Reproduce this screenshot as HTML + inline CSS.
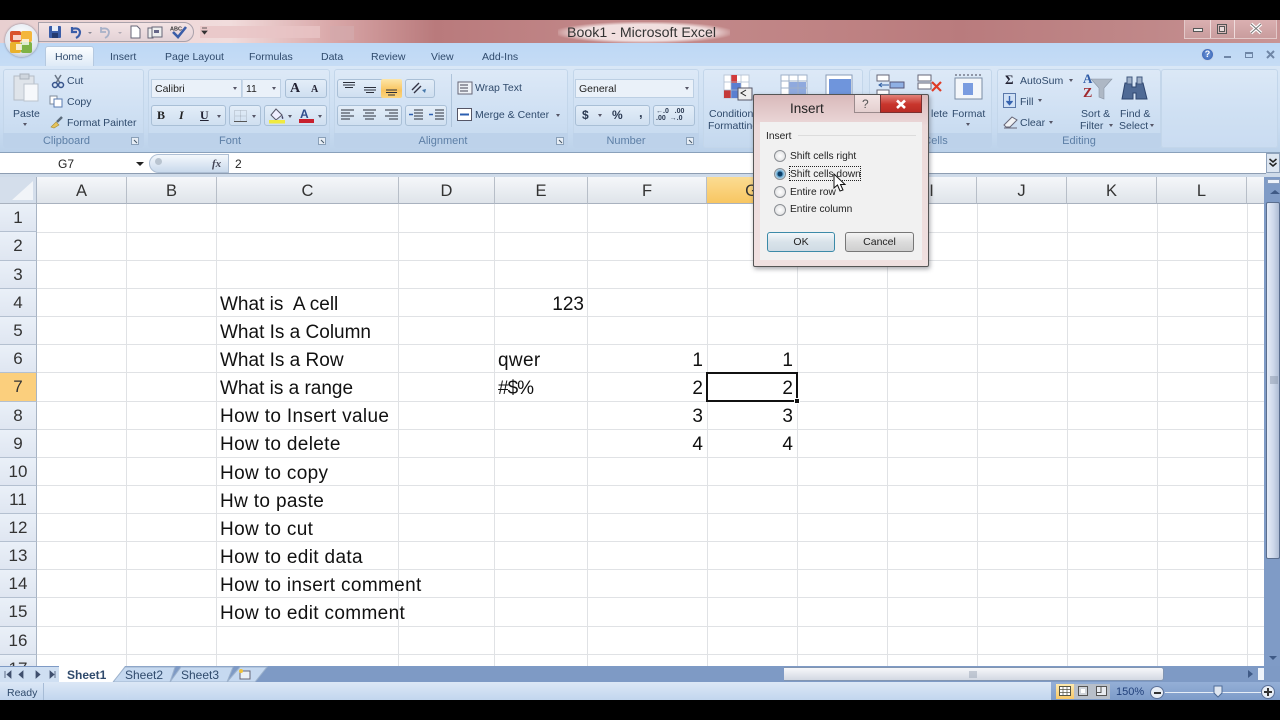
<!DOCTYPE html>
<html><head><meta charset="utf-8"><style>
html,body{margin:0;padding:0;background:#000;width:1280px;height:720px;overflow:hidden}
body{font-family:"Liberation Sans",sans-serif;position:relative}
#app{position:absolute;left:0;top:0;width:1280px;height:720px;overflow:hidden;filter:blur(.35px)}
.a{position:absolute}
.t{position:absolute;white-space:nowrap;line-height:16px;font-size:10.5px;color:#2f4a6c}
.k{color:#222}
.g{position:absolute;background:#e0e2e5}
.c{position:absolute;white-space:nowrap;font-size:19px;letter-spacing:.35px;line-height:32px;color:#111;height:28px}
.r{text-align:right;letter-spacing:0}
.rn{position:absolute;left:0;width:37px;text-align:center;font-size:17px;line-height:28px;height:28px;color:#333;background:linear-gradient(#eaf0f8,#dfe6f1);box-sizing:border-box;border-bottom:1px solid #b4c0d0;border-right:1px solid #a8b4c4}
.ch{position:absolute;top:177px;height:27px;text-align:center;font-size:16.5px;line-height:29px;color:#333;background:linear-gradient(#f5f7fa,#dfe4ea);box-sizing:border-box;border-right:1px solid #b7bec8;border-bottom:1px solid #a9b2bf}
.grp{position:absolute;top:69px;height:79px;border-radius:3px;background:linear-gradient(#dde9f7 0%,#cfe0f3 55%,#c4d8ee 100%);box-shadow:inset 0 0 0 1px #c3d6ea}
.gl{position:absolute;left:0;right:0;bottom:0;height:15px;background:#bdd2ea;text-align:center;font-size:11px;line-height:16px;color:#5d7fa6;border-radius:0 0 3px 3px}
.btn{position:absolute;box-sizing:border-box;border:1px solid #a9bfd6;border-radius:3px;background:linear-gradient(#e3edf8,#cfdff0)}
.inp{position:absolute;box-sizing:border-box;background:#eaf1f9;border:1px solid #bccfe3;height:19px;font-size:10.5px;line-height:19px;color:#222;padding-left:3px}
.arr{position:absolute;width:0;height:0;border-left:2.5px solid transparent;border-right:2.5px solid transparent;border-top:3px solid #556}
.tab{position:absolute;top:49px;font-size:10.5px;line-height:16px;color:#2f4a6c;white-space:nowrap}
.radio{position:absolute;left:774px;width:10px;height:10px;border-radius:50%;border:1px solid #8b8f94;background:radial-gradient(#fff,#d9dadc)}
.rl{position:absolute;left:790px;font-size:10.2px;line-height:14px;color:#222;white-space:nowrap}
svg{position:absolute;overflow:visible}
</style></head><body><div id="app">

<!-- title bar -->
<div class="a" style="left:0;top:20px;width:1280px;height:23px;background:linear-gradient(90deg,#e8cfd0 0,#f1dcdc 18%,#d9a7a8 26%,#b97a7c 34%,#c38a8b 50%,#bf8384 64%,#b97b7d 75%,#c08889 90%,#c89495 100%)"></div>
<div class="a" style="left:200px;top:26px;width:120px;height:12px;background:#e9c4c6;opacity:.8"></div>
<div class="a" style="left:330px;top:26px;width:24px;height:14px;background:#d3a9ab;opacity:.8"></div>
<div class="a" style="left:558px;top:22px;width:172px;height:21px;background:radial-gradient(ellipse at center,#f1dfdf 55%,rgba(240,220,220,0) 75%)"></div>
<div class="t k" style="left:567px;top:25px;font-size:14.2px;line-height:16px;color:#333">Book1 - Microsoft Excel</div>
<!-- QAT -->
<div class="a" style="left:38px;top:22px;width:156px;height:20px;border-radius:0 11px 11px 0;background:linear-gradient(#f3e3e4,#e3d2d6);border:1px solid #a9a1aa;box-sizing:border-box"></div>
<svg style="left:48px;top:25px" width="150" height="15" viewBox="0 0 150 15">
<rect x="1" y="1" width="12" height="12" fill="#3a5da8" rx="1"/><rect x="4" y="1" width="6" height="5" fill="#e8eef8"/><rect x="4" y="8" width="6" height="5" fill="#23396f"/>
<path d="M24 4 Q31 2 32 7 Q32 11 28 13 M24 2 V7 H29" fill="none" stroke="#3a5da8" stroke-width="2.2"/>
<path d="M40 7h4l-2 2z" fill="#8a8a96"/>
<path d="M53 4 Q60 2 61 7 Q61 11 57 13 M53 2 V7 H58" fill="none" stroke="#a8b1c8" stroke-width="1.8"/>
<path d="M70 7h4l-2 2z" fill="#b0aab4"/>
<path d="M83 1h6l3 3v9h-9z" fill="#fff" stroke="#667"/>
<rect x="100" y="3" width="5" height="10" fill="#eee" stroke="#667"/><rect x="104" y="2" width="10" height="10" fill="#eee" stroke="#667"/><rect x="106" y="5" width="5" height="3" fill="#668"/>
<path d="M125 7 L130 12 L138 2" fill="none" stroke="#3a5da8" stroke-width="2.6"/>
<text x="122" y="5.5" font-size="5.5" font-family="Liberation Sans" font-weight="bold" fill="#333">ABC</text>
<path d="M154 3h5M154 6h5l-2.500 3z" fill="#333" stroke="#333" stroke-width=".8"/>
</svg>
<!-- window controls -->
<div class="a" style="left:1184px;top:20px;width:93px;height:19px;border:1px solid #e3c9c9;border-top:0;box-sizing:border-box;background:linear-gradient(#dab0b1,#c99c9d)"></div>
<div class="a" style="left:1210px;top:20px;width:1px;height:18px;background:#efdcdc"></div>
<div class="a" style="left:1234px;top:20px;width:1px;height:18px;background:#efdcdc"></div>
<div class="a" style="left:1193px;top:28px;width:10px;height:4px;border:1px solid #555;background:#eee;box-sizing:border-box"></div>
<div class="a" style="left:1217px;top:24px;width:10px;height:10px;border:1px solid #555;box-sizing:border-box;background:#d9b9ba"></div>
<div class="a" style="left:1219px;top:26px;width:6px;height:6px;border:1px solid #555;box-sizing:border-box;background:#eadada"></div>
<svg style="left:1249px;top:23px" width="14" height="12"><path d="M2 1 L12 10 M12 1 L2 10" stroke="#fff" stroke-width="3.500"/><path d="M2 1 L12 10 M12 1 L2 10" stroke="#777" stroke-width="1"/></svg>

<!-- tabs row -->
<div class="a" style="left:0;top:43px;width:1280px;height:23px;background:linear-gradient(#bdd8f5,#c6dcf5)"></div>
<div class="a" style="left:45px;top:46px;width:49px;height:21px;background:linear-gradient(#fbfdff,#dde9f6);border:1px solid #b5c9e0;border-bottom:0;border-radius:3px 3px 0 0;box-sizing:border-box"></div>
<div class="tab" style="left:55px">Home</div>
<div class="tab" style="left:110px">Insert</div>
<div class="tab" style="left:165px">Page Layout</div>
<div class="tab" style="left:249px">Formulas</div>
<div class="tab" style="left:321px">Data</div>
<div class="tab" style="left:371px">Review</div>
<div class="tab" style="left:431px">View</div>
<div class="tab" style="left:482px">Add-Ins</div>
<div class="a" style="left:1201px;top:48px;width:13px;height:13px;border-radius:50%;background:radial-gradient(#6f96d8,#2f5cb0);border:1px solid #c4d3ea;box-sizing:border-box;color:#fff;font-size:9px;line-height:11px;text-align:center;font-weight:bold">?</div>
<div class="a" style="left:1224px;top:56px;width:7px;height:2px;background:#6f86a6"></div>
<div class="a" style="left:1245px;top:52px;width:8px;height:6px;border:1px solid #6f86a6;border-top-width:2px;box-sizing:border-box"></div>
<svg style="left:1266px;top:50px" width="10" height="10"><path d="M1 1L8 8M8 1L1 8" stroke="#6f86a6" stroke-width="2"/></svg>

<!-- ribbon -->
<div class="a" style="left:0;top:66px;width:1280px;height:87px;background:linear-gradient(#d9e7f6,#c9dcf1 70%,#bcd2ea);border-bottom:1px solid #8aa1bb;box-sizing:border-box"></div>
<div class="grp" style="left:3px;width:141px"><div class="gl" style="padding-right:14px">Clipboard</div></div>
<div class="grp" style="left:148px;width:182px"><div class="gl" style="padding-right:18px">Font</div></div>
<div class="grp" style="left:334px;width:234px"><div class="gl" style="padding-right:16px">Alignment</div></div>
<div class="grp" style="left:573px;width:126px"><div class="gl" style="padding-right:20px">Number</div></div>
<div class="grp" style="left:703px;width:160px"></div>
<div class="grp" style="left:869px;width:123px"><div class="gl" style="padding-left:10px">Cells</div></div>
<div class="grp" style="left:997px;width:164px"><div class="gl">Editing</div></div>
<div class="grp" style="left:1161px;width:117px;background:linear-gradient(#dbe8f6,#cfe0f3 55%,#cadcf1)"></div>

<!-- office orb -->
<div class="a" style="left:5px;top:24px;width:33px;height:33px;border-radius:50%;background:radial-gradient(circle at 50% 35%,#fff,#dfe6f0 65%,#9aa6b6);box-shadow:0 0 2px #778"></div>
<svg style="left:9px;top:29px" width="26" height="26" viewBox="0 0 26 26">
<rect x="1" y="2" width="11" height="11" rx="2" fill="#d9522a"/><rect x="12" y="2" width="11" height="11" rx="2" fill="#f4b63c"/><rect x="1" y="13" width="11" height="11" rx="2" fill="#e9b12d"/><rect x="12" y="13" width="11" height="11" rx="2" fill="#7fb245"/>
<path d="M4 6h8v5H4zM13 10h7v6h-7zM7 15h6v6H7z" fill="#fff" opacity=".75"/></svg>

<!-- clipboard -->
<svg style="left:13px;top:73px" width="28" height="30"><rect x="1" y="3" width="20" height="24" fill="#dfe4ea" stroke="#b4bcc6"/><rect x="7" y="1" width="9" height="5" fill="#cfd6de" stroke="#aab2bc"/><rect x="11" y="11" width="14" height="17" fill="#f6f8fb" stroke="#bcc4ce"/></svg>
<div class="t" style="left:13px;top:106px;color:#2f4a6c">Paste</div>
<div class="arr" style="left:23px;top:123px"></div>
<svg style="left:51px;top:74px" width="14" height="15"><path d="M4 1L9 9M10 1L5 9" stroke="#6a7686" stroke-width="1.500"/><circle cx="4" cy="11" r="2.500" fill="none" stroke="#37548c" stroke-width="1.500"/><circle cx="10" cy="11" r="2.500" fill="none" stroke="#37548c" stroke-width="1.500"/></svg>
<div class="t" style="left:67px;top:73px">Cut</div>
<svg style="left:49px;top:95px" width="14" height="13"><rect x="1" y="1" width="7" height="8" fill="#fff" stroke="#7e8a9a"/><rect x="5" y="4" width="8" height="8" fill="#fff" stroke="#5a7bb0"/></svg>
<div class="t" style="left:67px;top:94px">Copy</div>
<svg style="left:49px;top:115px" width="15" height="14"><path d="M2 12L7 7L10 10L5 13Z" fill="#e6c35c" stroke="#a68b30" stroke-width=".6"/><path d="M8 7L13 2" stroke="#5a6a7a" stroke-width="2.500"/></svg>
<div class="t" style="left:67px;top:115px">Format Painter</div>
<!-- font -->
<div class="inp" style="left:151px;top:79px;width:91px">Calibri<div class="arr" style="left:81px;top:7px"></div></div>
<div class="inp" style="left:242px;top:79px;width:39px;border-left:1px solid #c9d8e8">11<div class="arr" style="left:29px;top:7px"></div></div>
<div class="btn" style="left:285px;top:79px;width:42px;height:19px"></div>
<div class="a" style="left:290px;top:80px;font:bold 14px/17px 'Liberation Serif',serif;color:#223">A</div>
<div class="a" style="left:311px;top:83px;font:bold 10px/14px 'Liberation Serif',serif;color:#223">A</div>
<div class="btn" style="left:151px;top:105px;width:75px;height:21px"></div>
<div class="a" style="left:157px;top:107px;font:bold 12px/16px 'Liberation Serif',serif;color:#222">B</div>
<div class="a" style="left:179px;top:107px;font:italic bold 12px/16px 'Liberation Serif',serif;color:#222">I</div>
<div class="a" style="left:200px;top:107px;font:bold 12px/16px 'Liberation Serif',serif;color:#223;text-decoration:underline">U</div>
<div class="arr" style="left:217px;top:115px"></div>
<div class="btn" style="left:229px;top:105px;width:32px;height:21px"></div>
<svg style="left:234px;top:110px" width="13" height="12"><path d="M.5.5h12v11H.5zM.5 6h12M6.500.5v11" fill="none" stroke="#aab4c0" stroke-dasharray="1 1"/><path d="M0 11.500h13" stroke="#555"/></svg>
<div class="arr" style="left:252px;top:115px"></div>
<div class="btn" style="left:264px;top:105px;width:63px;height:21px"></div>
<svg style="left:268px;top:108px" width="18" height="16"><path d="M8 1L14 7L8 12L3 7Z" fill="#eef" stroke="#556"/><path d="M14 7q2 3 1 4q-2 0-1-4" fill="#446"/><rect x="1" y="12" width="16" height="3.500" fill="#f0ea40"/></svg>
<div class="arr" style="left:288px;top:115px"></div>
<div class="a" style="left:300px;top:108px;font:bold 12px/13px 'Liberation Sans',sans-serif;color:#2f4d8c">A</div>
<div class="a" style="left:299px;top:119px;width:15px;height:4px;background:#c8202e"></div>
<div class="arr" style="left:318px;top:115px"></div>
<svg style="left:131px;top:137px" width="9" height="9"><rect x=".5" y=".5" width="7" height="7" fill="#e6edf5" stroke="#8aa0b8"/><path d="M3 3L6 6" stroke="#456"/></svg>
<svg style="left:318px;top:137px" width="9" height="9"><rect x=".5" y=".5" width="7" height="7" fill="#e6edf5" stroke="#8aa0b8"/><path d="M3 3L6 6" stroke="#456"/></svg>
<svg style="left:556px;top:137px" width="9" height="9"><rect x=".5" y=".5" width="7" height="7" fill="#e6edf5" stroke="#8aa0b8"/><path d="M3 3L6 6" stroke="#456"/></svg>
<svg style="left:686px;top:137px" width="9" height="9"><rect x=".5" y=".5" width="7" height="7" fill="#e6edf5" stroke="#8aa0b8"/><path d="M3 3L6 6" stroke="#456"/></svg>
<!-- alignment -->
<div class="btn" style="left:337px;top:79px;width:65px;height:19px"></div>
<div class="a" style="left:381px;top:79px;width:21px;height:19px;background:linear-gradient(#fde7a9,#f9c45f 60%,#fbd57f);border-radius:2px"></div>
<svg style="left:342px;top:80px" width="60" height="17"><path d="M1 2.500h12M1 5h12M3 7.500h8M22 7.500h12M22 10h12M24 12.500h8M44 10h11M44 12.500h11M46 15h7" stroke="#2b2f3a" stroke-width="1"/></svg>
<div class="btn" style="left:405px;top:79px;width:30px;height:19px"></div>
<svg style="left:410px;top:81px" width="20" height="15"><path d="M2 9L9 2M4 12L11 5" stroke="#334" stroke-width="1.400"/><path d="M12 9l4-1-1 4z" fill="#47a"/></svg>
<div class="btn" style="left:337px;top:105px;width:65px;height:21px"></div>
<svg style="left:340px;top:108px" width="60" height="15"><path d="M1 2h13M1 5h9M1 8h13M1 11h9M23 2h13M25 5h9M23 8h13M25 11h9M45 2h13M49 5h9M45 8h13M49 11h9" stroke="#2b2f3a" stroke-width="1.100"/></svg>
<div class="btn" style="left:405px;top:105px;width:42px;height:21px"></div>
<svg style="left:408px;top:108px" width="38" height="15"><path d="M6 2h9M6 5h9M6 8h9M6 11h9M27 2h9M27 5h9M27 8h9M27 11h9" stroke="#2b2f3a"/><path d="M1 6.500h4M25 6.500h-4" stroke="#2c5fb0" stroke-width="1.500"/></svg>
<div class="a" style="left:451px;top:74px;width:1px;height:53px;background:#aec3da"></div>
<svg style="left:457px;top:80px" width="16" height="16"><rect x="1" y="2" width="14" height="12" fill="#eef2f7" stroke="#667"/><path d="M3 5h8M3 8h8M3 11h8" stroke="#445"/></svg>
<div class="t" style="left:475px;top:80px">Wrap Text</div>
<svg style="left:457px;top:108px" width="16" height="14"><rect x=".5" y=".5" width="14" height="12" fill="#fff" stroke="#556"/><path d="M3 6.500h9" stroke="#2c5fb0" stroke-width="2"/></svg>
<div class="t" style="left:475px;top:107px">Merge &amp; Center</div>
<div class="arr" style="left:556px;top:114px"></div>
<!-- number -->
<div class="inp" style="left:575px;top:79px;width:119px">General<div class="arr" style="left:109px;top:7px"></div></div>
<div class="btn" style="left:575px;top:105px;width:75px;height:21px"></div>
<div class="a" style="left:582px;top:107px;font:bold 12px/16px 'Liberation Sans',sans-serif;color:#2b3a52">$</div>
<div class="arr" style="left:598px;top:114px"></div>
<div class="a" style="left:612px;top:107px;font:bold 12px/16px 'Liberation Sans',sans-serif;color:#2b3a52">%</div>
<div class="a" style="left:639px;top:105px;font:bold 13px/16px 'Liberation Sans',sans-serif;color:#2b3a52">,</div>
<div class="btn" style="left:653px;top:105px;width:42px;height:21px"></div>
<div class="a" style="left:656px;top:108px;font:bold 7px/7px 'Liberation Sans',sans-serif;color:#2b3a52;white-space:pre">←.0   .00
.00  →.0</div>
<!-- styles -->
<svg style="left:723px;top:74px" width="30" height="28"><rect x="1" y="1" width="25" height="23" fill="#fff" stroke="#bcc8d8"/><rect x="8" y="1" width="6" height="10" fill="#d23a3a"/><rect x="8" y="9" width="10" height="7" fill="#5b7fd0"/><rect x="1" y="16" width="7" height="8" fill="#c43a3a"/><rect x="8" y="16" width="7" height="8" fill="#5b7fd0"/><path d="M1 8h25M1 16h25M8 1v23M18 1v23" stroke="#aabbd0" stroke-width=".7"/><rect x="15" y="14" width="14" height="12" fill="#eee" stroke="#556"/><path d="M23 16l-5 3 5 3" fill="none" stroke="#222"/></svg>
<div class="t" style="left:709px;top:106px;width:44px;overflow:hidden">Conditional</div>
<div class="t" style="left:708px;top:118px;width:45px;overflow:hidden">Formatting</div>
<svg style="left:780px;top:74px" width="32" height="22"><rect x="1" y="1" width="26" height="20" fill="#fff" stroke="#9fb0c8"/><rect x="9" y="8" width="17" height="12" fill="#8fa9de"/><path d="M1 7h26M1 14h26M9 1v20M18 1v20" stroke="#9fb0c8"/></svg>
<svg style="left:825px;top:74px" width="32" height="22"><rect x="1" y="1" width="26" height="20" fill="#fff" stroke="#8a9cb8"/><rect x="4" y="5" width="22" height="15" fill="#6f95dc"/></svg>
<!-- cells -->
<svg style="left:876px;top:73px" width="34" height="24"><rect x="1" y="2" width="12" height="6" fill="#fff" stroke="#667"/><rect x="1" y="17" width="12" height="6" fill="#fff" stroke="#667"/><rect x="14" y="9" width="14" height="6" fill="#8fb0e4" stroke="#557"/><path d="M13 12H3M6 10L3 12L6 14" fill="none" stroke="#2f5ca0"/></svg>
<svg style="left:917px;top:73px" width="30" height="24"><rect x="1" y="2" width="13" height="6" fill="#fff" stroke="#667"/><rect x="1" y="10" width="13" height="6" fill="#fff" stroke="#667"/><path d="M15 9L24 18M24 9L15 18" stroke="#df3b26" stroke-width="2.200"/></svg>
<svg style="left:954px;top:74px" width="30" height="28"><rect x="1" y="4" width="27" height="21" fill="#f3f6fa" stroke="#7a8ca4"/><rect x="9" y="9" width="10" height="12" fill="#7a9ce0"/><path d="M1 1h27" stroke="#445" stroke-dasharray="2 2"/></svg>
<div class="t" style="left:931px;top:106px">lete</div>
<div class="t" style="left:952px;top:106px">Format</div>
<div class="arr" style="left:966px;top:123px"></div>
<!-- editing -->
<div class="a" style="left:1005px;top:72px;font:bold 13px/16px 'Liberation Serif',serif;color:#223">Σ</div>
<div class="t" style="left:1020px;top:73px">AutoSum</div>
<div class="arr" style="left:1069px;top:79px"></div>
<svg style="left:1003px;top:93px" width="14" height="16"><rect x=".5" y=".5" width="12" height="14" fill="#cfe0f5" stroke="#5a78aa"/><path d="M6.500 3v7M3.500 8l3 3.500 3-3.500" fill="#3764b0" stroke="#3764b0" stroke-width="1.400"/></svg>
<div class="t" style="left:1020px;top:94px">Fill</div>
<div class="arr" style="left:1038px;top:99px"></div>
<svg style="left:1003px;top:115px" width="15" height="14"><path d="M1 10L9 2L14 5L7 12H3Z" fill="#f0f2f5" stroke="#667"/><path d="M1 13h13" stroke="#667"/></svg>
<div class="t" style="left:1020px;top:115px">Clear</div>
<div class="arr" style="left:1049px;top:121px"></div>
<div class="a" style="left:1083px;top:72px;font:bold 13px/13px 'Liberation Serif',serif;color:#2f5ba6">A</div>
<div class="a" style="left:1083px;top:87px;font:bold 14px/14px 'Liberation Serif',serif;color:#a02b30">Z</div>
<svg style="left:1090px;top:78px" width="24" height="24"><path d="M1 1H22L14 10V21L9 19V10Z" fill="#aeb8c5" stroke="#8a96a6" stroke-width=".6"/></svg>
<svg style="left:1121px;top:75px" width="28" height="25"><path d="M4 8h7v4h4V8h7l4 16H15v-6h-3v6H1Z" fill="#4f6a95" stroke="#2e456e"/><rect x="6" y="2" width="5" height="7" fill="#9fb0c8" stroke="#40587f"/><rect x="16" y="2" width="5" height="7" fill="#9fb0c8" stroke="#40587f"/></svg>
<div class="t" style="left:1081px;top:106px">Sort &amp;</div>
<div class="t" style="left:1080px;top:118px">Filter</div><div class="arr" style="left:1109px;top:124px"></div>
<div class="t" style="left:1120px;top:106px">Find &amp;</div>
<div class="t" style="left:1119px;top:118px">Select</div><div class="arr" style="left:1150px;top:124px"></div>

<!-- formula bar -->
<div class="a" style="left:0;top:153px;width:1280px;height:24px;background:#cfdbe9"></div>
<div class="a" style="left:0;top:153px;width:1266px;height:20px;background:#fff;border-bottom:1px solid #8d9db2;box-sizing:content-box"></div>
<div class="a" style="left:58px;top:157px;font-size:12px;line-height:14px;color:#222">G7</div>
<div class="a" style="left:136px;top:162px;width:0;height:0;border-left:4px solid transparent;border-right:4px solid transparent;border-top:4px solid #222"></div>
<div class="a" style="left:149px;top:154px;width:80px;height:19px;border-radius:10px 0 0 10px;background:linear-gradient(#f4f8fc,#c9d9ec);border:1px solid #aebfd4;box-sizing:border-box"></div>
<div class="a" style="left:155px;top:158px;width:7px;height:7px;border-radius:50%;background:#b9c4d0"></div>
<div class="a" style="left:212px;top:157px;font:italic bold 11px/14px 'Liberation Serif',serif;color:#445">fx</div>
<div class="a" style="left:235px;top:157px;font-size:12px;line-height:14px;color:#222">2</div>
<div class="a" style="left:1266px;top:153px;width:14px;height:20px;background:#dde6f1;border:1px solid #8fa2bb;box-sizing:border-box"></div>
<svg style="left:1268px;top:158px" width="10" height="10"><path d="M1.500 1L5 4L8.500 1M1.500 5L5 8L8.500 5" fill="none" stroke="#222" stroke-width="1.500"/></svg>

<!-- sheet background -->
<div class="a" style="left:0;top:177px;width:1280px;height:489px;background:#fff"></div>
<!-- gridlines vertical -->
<div class="g" style="left:126px;top:204px;width:1px;height:462px"></div>
<div class="g" style="left:216px;top:204px;width:1px;height:462px"></div>
<div class="g" style="left:398px;top:204px;width:1px;height:462px"></div>
<div class="g" style="left:494px;top:204px;width:1px;height:462px"></div>
<div class="g" style="left:587px;top:204px;width:1px;height:462px"></div>
<div class="g" style="left:707px;top:204px;width:1px;height:462px"></div>
<div class="g" style="left:797px;top:204px;width:1px;height:462px"></div>
<div class="g" style="left:887px;top:204px;width:1px;height:462px"></div>
<div class="g" style="left:977px;top:204px;width:1px;height:462px"></div>
<div class="g" style="left:1067px;top:204px;width:1px;height:462px"></div>
<div class="g" style="left:1157px;top:204px;width:1px;height:462px"></div>
<div class="g" style="left:1247px;top:204px;width:1px;height:462px"></div>
<!-- gridlines horizontal -->
<div class="g" style="left:37px;top:232px;width:1227px;height:1px"></div>
<div class="g" style="left:37px;top:260px;width:1227px;height:1px"></div>
<div class="g" style="left:37px;top:288px;width:1227px;height:1px"></div>
<div class="g" style="left:37px;top:316px;width:1227px;height:1px"></div>
<div class="g" style="left:37px;top:344px;width:1227px;height:1px"></div>
<div class="g" style="left:37px;top:372px;width:1227px;height:1px"></div>
<div class="g" style="left:37px;top:401px;width:1227px;height:1px"></div>
<div class="g" style="left:37px;top:429px;width:1227px;height:1px"></div>
<div class="g" style="left:37px;top:457px;width:1227px;height:1px"></div>
<div class="g" style="left:37px;top:485px;width:1227px;height:1px"></div>
<div class="g" style="left:37px;top:513px;width:1227px;height:1px"></div>
<div class="g" style="left:37px;top:541px;width:1227px;height:1px"></div>
<div class="g" style="left:37px;top:569px;width:1227px;height:1px"></div>
<div class="g" style="left:37px;top:597px;width:1227px;height:1px"></div>
<div class="g" style="left:37px;top:626px;width:1227px;height:1px"></div>
<div class="g" style="left:37px;top:654px;width:1227px;height:1px"></div>
<!-- column headers -->
<div class="a" style="left:0;top:177px;width:37px;height:27px;background:#d4deeb;border-right:1px solid #a8b4c4;border-bottom:1px solid #a9b2bf;box-sizing:border-box"></div>
<div class="a" style="left:12px;top:181px;width:0;height:0;border-left:21px solid transparent;border-bottom:19px solid #f1f4f8"></div>
<div class="ch" style="left:37px;width:90px">A</div>
<div class="ch" style="left:127px;width:90px">B</div>
<div class="ch" style="left:217px;width:182px">C</div>
<div class="ch" style="left:399px;width:96px">D</div>
<div class="ch" style="left:495px;width:93px">E</div>
<div class="ch" style="left:588px;width:119px">F</div>
<div class="ch" style="left:707px;width:90px;background:linear-gradient(#fbdc93,#f8c661)">G</div>
<div class="ch" style="left:797px;width:90px">H</div>
<div class="ch" style="left:887px;width:90px">I</div>
<div class="ch" style="left:977px;width:90px">J</div>
<div class="ch" style="left:1067px;width:90px">K</div>
<div class="ch" style="left:1157px;width:90px">L</div>
<div class="ch" style="left:1247px;width:17px;border-right:0"></div>
<!-- row headers -->
<div class="rn" style="top:204px">1</div>
<div class="rn" style="top:232px;height:29px">2</div>
<div class="rn" style="top:261px">3</div>
<div class="rn" style="top:289px">4</div>
<div class="rn" style="top:317px">5</div>
<div class="rn" style="top:345px">6</div>
<div class="rn" style="top:373px;height:29px;background:#fbcf7d">7</div>
<div class="rn" style="top:402px">8</div>
<div class="rn" style="top:430px">9</div>
<div class="rn" style="top:458px">10</div>
<div class="rn" style="top:486px">11</div>
<div class="rn" style="top:514px">12</div>
<div class="rn" style="top:542px">13</div>
<div class="rn" style="top:570px">14</div>
<div class="rn" style="top:598px;height:29px">15</div>
<div class="rn" style="top:627px">16</div>
<div class="rn" style="top:655px;height:11px;overflow:hidden;border-bottom:0">17</div>
<!-- cells -->
<div class="c" style="left:220px;top:289px;white-space:pre;letter-spacing:0">What is  A cell</div>
<div class="c" style="left:220px;top:317px;letter-spacing:0">What Is a Column</div>
<div class="c" style="left:220px;top:345px;letter-spacing:0">What Is a Row</div>
<div class="c" style="left:220px;top:373px;letter-spacing:0">What is a range</div>
<div class="c" style="left:220px;top:401px">How to Insert value</div>
<div class="c" style="left:220px;top:429px">How to delete</div>
<div class="c" style="left:220px;top:458px">How to copy</div>
<div class="c" style="left:220px;top:486px">Hw to paste</div>
<div class="c" style="left:220px;top:514px">How to cut</div>
<div class="c" style="left:220px;top:542px">How to edit data</div>
<div class="c" style="left:220px;top:570px">How to insert comment</div>
<div class="c" style="left:220px;top:598px">How to edit comment</div>
<div class="c r" style="left:500px;width:84px;top:289px">123</div>
<div class="c" style="left:498px;top:345px">qwer</div>
<div class="c" style="left:498px;top:373px;letter-spacing:-1px">#$%</div>
<div class="c r" style="left:640px;width:63px;top:345px">1</div>
<div class="c r" style="left:640px;width:63px;top:373px">2</div>
<div class="c r" style="left:640px;width:63px;top:401px">3</div>
<div class="c r" style="left:640px;width:63px;top:429px">4</div>
<div class="c r" style="left:730px;width:63px;top:345px">1</div>
<div class="c r" style="left:730px;width:63px;top:373px">2</div>
<div class="c r" style="left:730px;width:63px;top:401px">3</div>
<div class="c r" style="left:730px;width:63px;top:429px">4</div>
<!-- selection -->
<div class="a" style="left:706px;top:372px;width:92px;height:30px;border:2px solid #111;box-sizing:border-box"></div>
<div class="a" style="left:794px;top:398px;width:6px;height:6px;background:#111;border:1px solid #fff;box-sizing:border-box"></div>

<!-- vertical scrollbar -->
<div class="a" style="left:1264px;top:177px;width:16px;height:489px;background:#7f9bc6"></div>
<div class="a" style="left:1267px;top:179px;width:13px;height:5px;background:#eef3fa;border:1px solid #8a9fc0;box-sizing:border-box"></div>
<div class="a" style="left:1270px;top:190px;width:0;height:0;border-left:5px solid transparent;border-right:5px solid transparent;border-bottom:4px solid #3f5a86"></div>
<div class="a" style="left:1266px;top:202px;width:14px;height:357px;border:1px solid #5a6e8e;border-radius:2px;box-sizing:border-box;background:linear-gradient(90deg,#e6ecf7,#cdd8ea 55%,#aebcd4)"></div>
<svg style="left:1270px;top:376px" width="8" height="8"><path d="M0 1h8M0 3h8M0 5h8M0 7h8" stroke="#8a97ab"/></svg>
<div class="a" style="left:1269px;top:656px;width:0;height:0;border-left:4px solid transparent;border-right:4px solid transparent;border-top:4px solid #3f5a86"></div>

<!-- sheet tabs row -->
<div class="a" style="left:0;top:666px;width:1280px;height:16px;background:#7e9ac5"></div>
<div class="a" style="left:0;top:667px;width:59px;height:15px;background:#cfdff2"></div>
<svg style="left:4px;top:670px" width="50" height="9"><path d="M1 1v7M7 1L3 4.500L7 8ZM19 1L15 4.500L19 8ZM32 1L36 4.500L32 8ZM46 1L50 4.500L46 8ZM51 1v7" fill="#3f4f6d" stroke="#3f4f6d" stroke-width=".8"/></svg>
<svg style="left:0;top:666px" width="280" height="17" viewBox="0 0 280 17"><path d="M227 16L240 1H267L255 16Z" fill="#c6d9f0" stroke="#9db2cc"/><path d="M170 16L181 1H233L227 16Z" fill="#c6d9f0" stroke="#9db2cc"/><path d="M113 16L125 1H175L170 16Z" fill="#c6d9f0" stroke="#9db2cc"/><path d="M59 0H125L113 16H59Z" fill="#fff"/><path d="M113 16L125 1" stroke="#9db2cc" fill="none"/></svg>
<div class="t" style="left:67px;top:667px;font-size:12px;font-weight:bold;color:#2f4a6c">Sheet1</div>
<div class="t" style="left:125px;top:667px;font-size:12px">Sheet2</div>
<div class="t" style="left:181px;top:667px;font-size:12px">Sheet3</div>
<svg style="left:238px;top:668px" width="14" height="13"><rect x="2" y="3" width="10" height="8" fill="#eaf0f7" stroke="#667"/><circle cx="3" cy="3" r="2" fill="#f0c23a"/></svg>
<!-- h scrollbar -->
<div class="a" style="left:784px;top:667px;width:380px;height:14px;background:linear-gradient(#f6f7fa,#d2d8e2);border:1px solid #8195b2;border-left:0;box-sizing:border-box;border-radius:0 3px 3px 0"></div>
<svg style="left:969px;top:671px" width="8" height="7"><path d="M1 0v7M3 0v7M5 0v7M7 0v7" stroke="#9aa5b5"/></svg>
<div class="a" style="left:1248px;top:670px;width:0;height:0;border-top:4px solid transparent;border-bottom:4px solid transparent;border-left:5px solid #3f5a86"></div>
<div class="a" style="left:1258px;top:668px;width:6px;height:12px;background:#eef3fa"></div>

<!-- status bar -->
<div class="a" style="left:0;top:682px;width:1280px;height:18px;background:linear-gradient(#dce8f6,#c2d6ee)"></div>
<div class="a" style="left:43px;top:683px;width:1px;height:17px;background:#a7bcd6"></div>
<div class="t" style="left:7px;top:685px;font-size:10.500px">Ready</div>
<div class="a" style="left:1051px;top:682px;width:229px;height:18px;background:linear-gradient(#94afd6,#7d9bc9)"></div>
<div class="a" style="left:1056px;top:684px;width:18px;height:15px;background:linear-gradient(#fde9ae,#f8c868)"></div>
<div class="a" style="left:1074px;top:684px;width:19px;height:15px;background:#b8bfc9"></div>
<div class="a" style="left:1092px;top:684px;width:18px;height:15px;background:#b8bfc9"></div>
<svg style="left:1059px;top:686px" width="50" height="11"><rect x=".5" y=".5" width="11" height="9" fill="#fff" stroke="#554"/><path d="M.5 3.500h11M.5 6.500h11M4 .5v9M8 .5v9" stroke="#554" stroke-width=".7"/><rect x="19.500" y=".5" width="9" height="9" fill="#d0d4da" stroke="#555"/><rect x="22" y="3" width="4" height="4" fill="#fff"/><rect x="37.500" y=".5" width="10" height="9" fill="#e8ebf0" stroke="#555"/><path d="M42 .5v6h-4" fill="none" stroke="#555"/></svg>
<div class="t" style="left:1116px;top:684px;font-size:11px;color:#21407a">150%</div>
<div class="a" style="left:1150px;top:686px;width:14px;height:13px;border-radius:50%;background:#e8eef6;border:1px solid #5b7199;box-sizing:border-box"></div>
<div class="a" style="left:1154px;top:692px;width:7px;height:2px;background:#333"></div>
<div class="a" style="left:1165px;top:692px;width:96px;height:1px;background:#e6edf6"></div>
<svg style="left:1213px;top:685px" width="10" height="13"><path d="M1 1H9V8L5 12L1 8Z" fill="#dfe6f0" stroke="#4f6c99"/></svg>
<div class="a" style="left:1261px;top:685px;width:14px;height:14px;border-radius:50%;background:#e8eef6;border:1px solid #5b7199;box-sizing:border-box"></div>
<div class="a" style="left:1264px;top:691px;width:8px;height:2px;background:#333"></div>
<div class="a" style="left:1267px;top:688px;width:2px;height:8px;background:#333"></div>

<!-- dialog -->
<div class="a" style="left:753px;top:94px;width:176px;height:173px;background:linear-gradient(#d9b9bb,#ecd9d9 18%,#f0e0e0);border:1px solid #555;border-radius:2px;box-sizing:border-box;box-shadow:1px 2px 5px rgba(60,60,70,.45)"></div>
<div class="a" style="left:760px;top:122px;width:162px;height:138px;background:#f1f1f1"></div>
<div class="t k" style="left:790px;top:100px;font-size:13.500px;line-height:17px;color:#222">Insert</div>
<div class="a" style="left:854px;top:95px;width:28px;height:18px;background:linear-gradient(#f3e4e4,#e4cfcf);border:1px solid #9a8a8c;border-top:0;box-sizing:border-box"></div>
<div class="a" style="left:862px;top:97px;font-size:12px;line-height:14px;color:#555">?</div>
<div class="a" style="left:880px;top:95px;width:42px;height:18px;background:linear-gradient(#e2827a,#c8352c 55%,#b92b24);border:1px solid #7a3030;border-top:0;box-sizing:border-box"></div>
<svg style="left:895px;top:99px" width="12" height="11"><path d="M2 1.500L10 9M10 1.500L2 9" stroke="#fff" stroke-width="2.600"/></svg>
<div class="t k" style="left:766px;top:129px;font-size:10.200px;color:#222">Insert</div>
<div class="a" style="left:798px;top:135px;width:118px;height:1px;background:#dcdcdc"></div>
<div class="radio" style="top:150px"></div>
<div class="rl" style="top:150px">Shift cells right</div>
<div class="radio" style="top:168px;background:radial-gradient(#0d3d66 30%,#5aa0cc 40%,#d5e6f0 75%)"></div>
<div class="a" style="left:789px;top:166px;width:72px;height:15px;border:1px dotted #222;box-sizing:border-box"></div>
<div class="rl" style="top:168px">Shift cells down</div>
<div class="radio" style="top:186px"></div>
<div class="rl" style="top:186px">Entire row</div>
<div class="radio" style="top:204px"></div>
<div class="rl" style="top:203px">Entire column</div>
<div class="a" style="left:767px;top:232px;width:68px;height:20px;background:linear-gradient(#f3f7fa,#d9e3ea 50%,#cfdbe4);border:1px solid #3b8aa8;border-radius:3px;box-sizing:border-box;text-align:center;font-size:10.500px;line-height:18px;color:#222">OK</div>
<div class="a" style="left:845px;top:232px;width:69px;height:20px;background:linear-gradient(#f4f4f4,#dcdcdc 50%,#cfcfcf);border:1px solid #777;border-radius:3px;box-sizing:border-box;text-align:center;font-size:10.500px;line-height:18px;color:#222">Cancel</div>
<!-- cursor -->
<svg style="left:833px;top:173px" width="14" height="20"><path d="M1 1V15L4.500 12L7 18L10 17L7.500 11.500H12Z" fill="#fff" stroke="#111" stroke-width="1"/></svg>
</div></body></html>
